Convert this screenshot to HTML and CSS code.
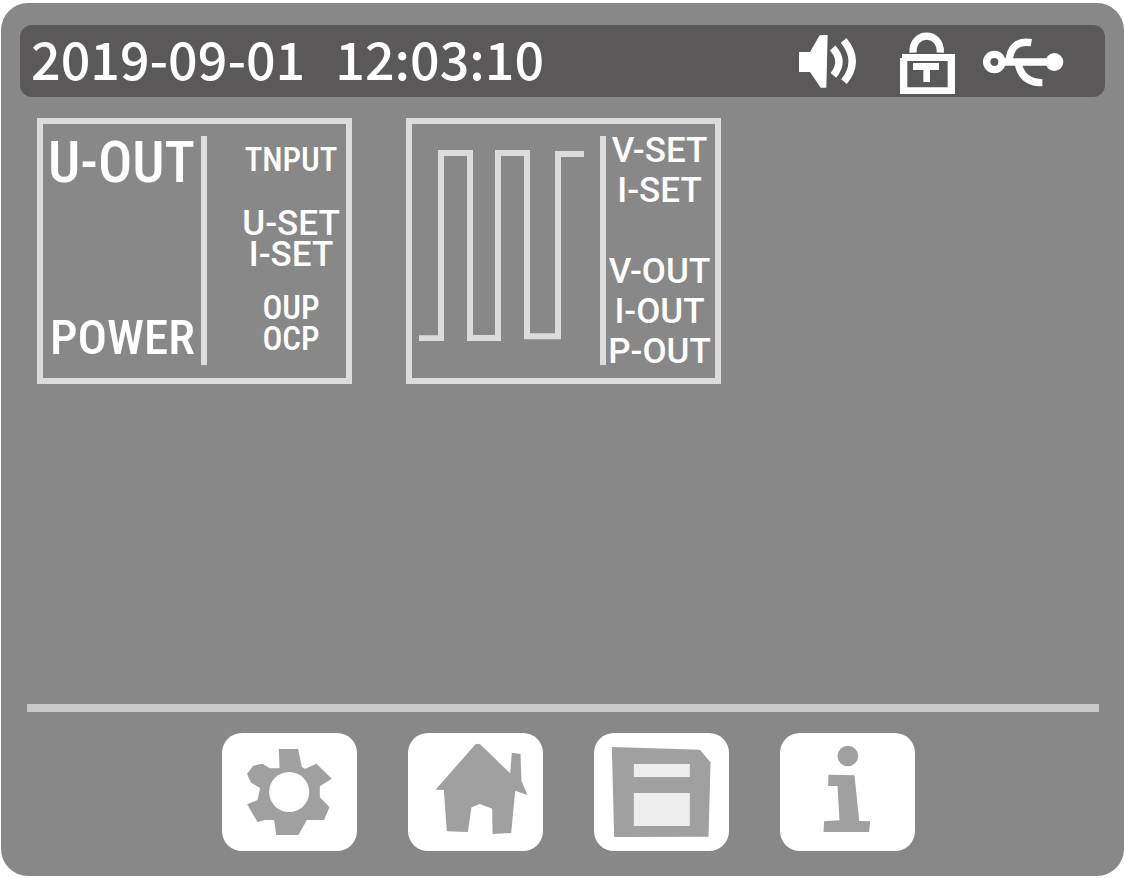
FILE: index.html
```
<!DOCTYPE html><html lang="en"><head><meta charset="utf-8"/>
<meta name="viewport" content="width=device-width, initial-scale=1.0">
<title>Power Supply Display</title>
<link rel="stylesheet" href="styles.css">
</head>
<body>
<div class="device">

<header class="status">
	<time class="clock" datetime="2019-09-01T12:03:10"><span>2019-09-01</span><span>12:03:10</span></time>
	<div class="status-icons">
		<svg width="73" height="62" viewBox="0 0 219 186" role="img" aria-label="Sound on">
			<path class="fill" d="M0 60H33L62 10L86 9L82 167H65L33 120H0Z"/>
			<path class="line" d="M101 48Q138 88 103 130M134 25Q185 88 135 149"/>
		</svg>
		<svg width="55" height="62" viewBox="0 0 165 186" role="img" aria-label="Locked">
			<path class="line" d="M39 62C36 -4 124 -4 121 62"/>
			<path class="fill" fill-rule="evenodd" d="M6 66H165V186H0V78H6ZM22 87V166H143V87Z"/>
			<path class="fill" d="M39 93H117V114H90V150H70V114H39Z"/>
		</svg>
		<svg width="81" height="62" viewBox="0 0 243 186" role="img" aria-label="USB connected">
			<circle class="line" cx="34" cy="90" r="23"/>
			<path class="line" d="M58 90H214M78 90C80 50 100 25 145 32M106 96C114 135 140 152 178 152"/>
			<circle class="fill" cx="214" cy="90" r="27"/>
		</svg>
	</div>
</header>

<main class="screens">
	<section class="card card-output">
		<div class="main-values">
			<div class="volt">U-OUT</div>
			<div class="power">POWER</div>
		</div>
		<div class="side">
			<div class="small">TNPUT</div>
			<div class="group">U-SET<br>I-SET</div>
			<div class="group small">OUP<br>OCP</div>
		</div>
	</section>
	<section class="card card-wave">
		<svg class="wave" width="165" height="191" viewBox="0 0 495 573" role="img" aria-label="Square wave">
			<path d="M0 565H66V9H153V564H237V9H324V559H417V12H495"/>
		</svg>
		<div class="side">
			<div>V-SET<br>I-SET</div>
			<div class="out">V-OUT<br>I-OUT<br>P-OUT</div>
		</div>
	</section>
</main>

<nav class="menu">
	<button type="button" aria-label="Settings">
		<svg viewBox="0 0 404 354">
			<path d="M170 48H228L239 102L249 107L283 92L329 137L293 160V193L322 222L306 261H254L229 306H162L156 261H128L106 267L75 214L106 201L114 165L88 150Q78 136 75 122L92 100Q108 92 122 93L143 106H172Z"/>
			<circle class="hole" cx="201" cy="177" r="60"/>
		</svg>
	</button>
	<button type="button" aria-label="Home">
		<svg viewBox="0 0 404 354">
			<path d="M82 170L202 34Q209 31 216 34L306 121L311 59L337 63L340 145L358 186L321 173L309 300L253 303L252 227L215 213L190 223L179 297L116 295L107 171Z"/>
		</svg>
	</button>
	<button type="button" aria-label="Save">
		<svg viewBox="0 0 404 354">
			<path d="M53 42L317 50L349 88L343 311L60 312Z"/>
			<path class="label" d="M119 93H287V132H119ZM119 180H287V279H119Z"/>
		</svg>
	</button>
	<button type="button" aria-label="Information">
		<svg viewBox="0 0 404 354">
			<circle cx="203" cy="69" r="31"/>
			<path d="M145 125L223 127L237 264L270 265L267 297H130L132 265L178 262L172 159H144Z"/>
		</svg>
	</button>
</nav>

</div>
</body>
</html>
```
FILE: styles.css
```
* {
	box-sizing: border-box;
}
body {
	margin: 0;
	padding: 3px 1px 2px;
	min-height: 100vh;
	display: flex;
	background-color: #fff;
	color: #fff;
	font-family: Roboto, "Liberation Sans", sans-serif;
	font-weight: 500;
}
.device {
	flex: 1;
	display: flex;
	flex-direction: column;
	padding: 22px 19px 25px;
	border-radius: 27px;
	background-color: #888;
}
/* status bar */
.status {
	display: flex;
	justify-content: space-between;
	align-items: flex-start;
	height: 72px;
	padding: 0 41px 0 11px;
	border-radius: 12px;
	background-color: #5a5859;
}
.clock {
	display: flex;
	gap: 30px;
	font-family: "Noto Sans CJK SC", sans-serif;
	font-size: 52px;
	line-height: 66px;
}
.status-icons {
	display: flex;
	gap: 28px;
	padding-top: 7px;
}
.fill {
	fill: #fff;
}
.line {
	fill: none;
	stroke: #fff;
	stroke-width: 22;
}
/* cards */
.screens {
	flex: 1;
	display: flex;
	flex-wrap: wrap;
	align-items: flex-start;
	gap: 54px;
	padding: 21px 17px;
}
.card {
	display: flex;
	width: 315px;
	height: 266px;
	padding: 12px 0 13px;
	border: 6px solid #dcdcdc;
}
.main-values {
	flex: 1;
	display: flex;
	flex-direction: column;
	justify-content: space-between;
	padding-left: 5px;
}
.volt, .power, .small {
	font-family: "Roboto Condensed", Roboto, sans-serif;
}
.volt {
	font-size: 57px;
	line-height: 54px;
}
.power {
	padding-left: 2px;
	font-size: 49px;
	line-height: 54px;
}
.side {
	border-left: 6px solid #dcdcdc;
	text-align: center;
	font-size: 35px;
	line-height: 31px;
}
.card-output .side {
	width: 145px;
	padding: 8px 0 0 29px;
}
.group {
	margin-top: 33px;
}
.group + .group {
	margin-top: 22px;
}
.small {
	font-size: 33px;
}
.card-wave {
	justify-content: space-between;
}
.card-wave .side {
	width: 115px;
	padding-right: 2px;
	line-height: 40px;
}
.card-wave .side div:first-child {
	margin-top: -5px;
}
.out {
	margin-top: 41px;
}
.wave {
	margin: 14px 0 0 7px;
}
.wave path {
	fill: none;
	stroke: #dcdcdc;
	stroke-width: 18;
}
/* bottom menu */
.menu {
	display: flex;
	justify-content: center;
	gap: 51px;
	margin: 0 6px 0 7px;
	padding: 21px 0 0 11px;
	border-top: 8px solid #c8c8c8;
}
.menu button {
	width: 135px;
	height: 118px;
	padding: 0;
	border: none;
	border-radius: 20px;
	background-color: #fff;
	cursor: pointer;
}
.menu svg {
	display: block;
	width: 100%;
	height: 100%;
	fill: #a0a0a0;
}
.menu .hole {
	fill: #fff;
}
.menu .label {
	fill: #eee;
}
```
